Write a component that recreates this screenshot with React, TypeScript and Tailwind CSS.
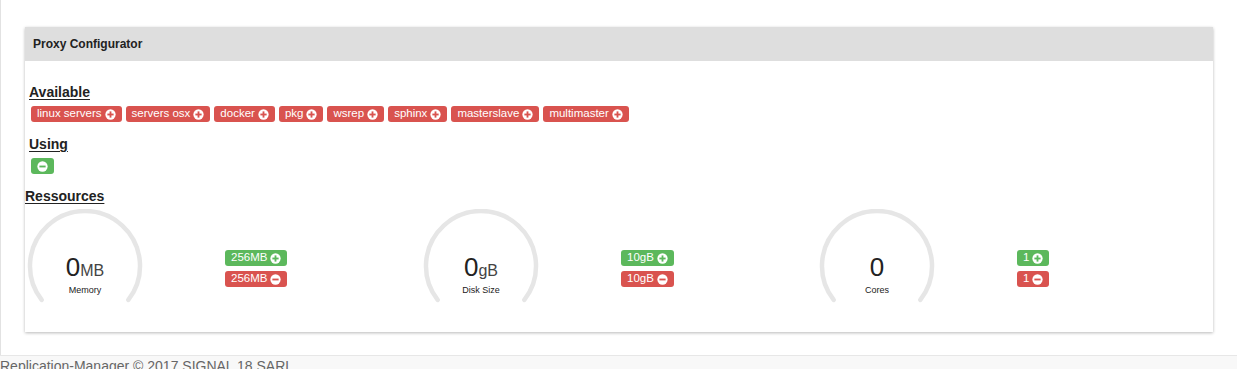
import React from "react";

const RED = "#d9534f";
const GREEN = "#5cb85c";

function SignIcon({ kind, color }: { kind: "plus" | "minus"; color: string }) {
  return (
    <svg width="11" height="11" viewBox="0 0 12 12" className="shrink-0">
      <circle cx="6" cy="6" r="5.6" fill="#fff" />
      <rect x="2.6" y="5" width="6.8" height="2" fill={color} />
      {kind === "plus" && <rect x="5" y="2.6" width="2" height="6.8" fill={color} />}
    </svg>
  );
}

function Badge({
  text,
  kind,
  color,
}: {
  text?: string;
  kind: "plus" | "minus";
  color: string;
}) {
  return (
    <span
      className="inline-flex h-[16px] items-center gap-[3px] rounded-[3px] px-[6px] text-[11.5px] leading-none text-white"
      style={{ backgroundColor: color }}
    >
      {text && <span>{text}</span>}
      <SignIcon kind={kind} color={color} />
    </span>
  );
}

function Gauge({ unit, label }: { unit: string; label: string }) {
  const cx = 60;
  const cy = 57;
  const r = 55;
  const a = (38 * Math.PI) / 180;
  const x1 = cx - r * Math.cos(a);
  const y1 = cy + r * Math.sin(a);
  const x2 = cx + r * Math.cos(a);
  const d = `M ${x1} ${y1} A ${r} ${r} 0 1 1 ${x2} ${y1}`;
  return (
    <svg width="120" height="100" viewBox="0 0 120 100" className="shrink-0">
      <path d={d} fill="none" stroke="#e6e6e6" strokeWidth="4.5" strokeLinecap="round" />
      <text
        x={cx}
        y={67}
        textAnchor="middle"
        fill="#222"
        fontFamily="'Liberation Sans', Arial, sans-serif"
      >
        <tspan fontSize="26">0</tspan>
        {unit && <tspan fontSize="16" fill="#444">{unit}</tspan>}
      </text>
      <text
        x={cx}
        y={84}
        textAnchor="middle"
        fill="#222"
        fontSize="9"
        fontFamily="'Liberation Sans', Arial, sans-serif"
      >
        {label}
      </text>
    </svg>
  );
}

function ResourceCol({
  unit,
  label,
  step,
}: {
  unit: string;
  label: string;
  step: string;
}) {
  return (
    <div className="flex items-start">
      <Gauge unit={unit} label={label} />
      <div className="ml-[80px] mt-[41px] flex flex-col items-start gap-[5px]">
        <Badge text={step} kind="plus" color={GREEN} />
        <Badge text={step} kind="minus" color={RED} />
      </div>
    </div>
  );
}

export default function App() {
  const available = [
    "linux servers",
    "servers osx",
    "docker",
    "pkg",
    "wsrep",
    "sphinx",
    "masterslave",
    "multimaster",
  ];
  return (
    <div
      className="h-[369px] w-full overflow-hidden bg-white text-[#333]"
      style={{ fontFamily: "'Liberation Sans', Arial, sans-serif" }}
    >
      <div className="h-[355px] border-l border-[#e2e2e2] pt-[27px] pl-[24px]">
        <div className="w-[1188px] bg-white shadow-[0_1px_3px_rgba(0,0,0,0.28)]">
          <div className="flex h-[34px] items-center bg-[#dedede] px-[8px] text-[12px] font-bold text-[#222]">
            Proxy Configurator
          </div>
          <div className="pb-[23px]">
            <div className="ml-[4px] mt-[23px] text-[14px] font-bold leading-[16px] text-[#222] underline underline-offset-[2px]">
              Available
            </div>
            <div className="ml-[6px] mt-[6px] flex gap-[4px]">
              {available.map((t) => (
                <Badge key={t} text={t} kind="plus" color={RED} />
              ))}
            </div>
            <div className="ml-[4px] mt-[14px] text-[14px] font-bold leading-[16px] text-[#222] underline underline-offset-[2px]">
              Using
            </div>
            <div className="ml-[6px] mt-[6px] flex">
              <Badge kind="minus" color={GREEN} />
            </div>
            <div className="mt-[14px] text-[14px] font-bold leading-[16px] text-[#222] underline underline-offset-[2px]">
              Ressources
            </div>
            <div className="mt-[5px] grid grid-cols-3">
              <ResourceCol unit="MB" label="Memory" step="256MB" />
              <ResourceCol unit="gB" label="Disk Size" step="10gB" />
              <ResourceCol unit="" label="Cores" step="1" />
            </div>
          </div>
        </div>
      </div>
      <div className="h-[14px] border-t border-[#e7e7e7] bg-[#f8f8f8] text-[14px] leading-[20px] text-[#666]">
        Replication-Manager © 2017 SIGNAL 18 SARL
      </div>
    </div>
  );
}
